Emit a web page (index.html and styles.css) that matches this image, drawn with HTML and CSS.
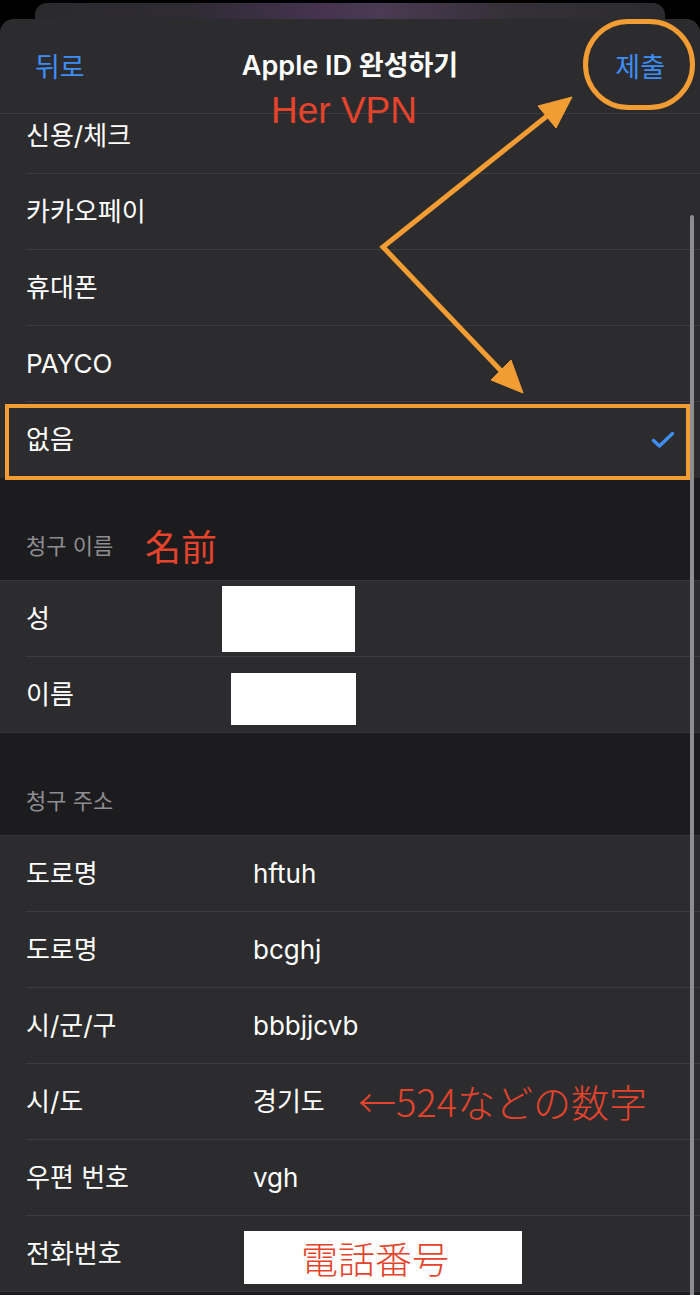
FILE: index.html
```html
<!DOCTYPE html>
<html lang="ko">
<head>
<meta charset="utf-8">
<title>Apple ID 완성하기</title>
<link rel="stylesheet" href="styles.css">
</head>
<body>
<div class="screen">
  <div class="backcard"></div>
  <div class="sheet">
    <header class="nav">
      <span class="nav-btn">뒤로</span>
      <h1 class="nav-title">Apple ID 완성하기</h1>
      <span class="nav-btn nav-right">제출</span>
    </header>

    <div class="scroll-clip">
      <ul class="group scrolled">
        <li class="row"><div class="cell"><span class="label">신용/체크</span></div></li>
        <li class="row"><div class="cell"><span class="label">카카오페이</span></div></li>
        <li class="row"><div class="cell"><span class="label">휴대폰</span></div></li>
        <li class="row"><div class="cell"><span class="label">PAYCO</span></div></li>
        <li class="row"><div class="cell last"><span class="label">없음</span>
          <svg class="check" viewBox="0 0 24 18" width="24" height="18"><polyline points="2.5,9.5 8.5,15 21.5,2.5" fill="none" stroke="#3e8ef7" stroke-width="3.4" stroke-linecap="round" stroke-linejoin="round"/></svg>
        </div></li>
      </ul>
    </div>

    <div class="section-head">청구 이름</div>
    <ul class="group bordered">
      <li class="row"><div class="cell"><span class="label">성</span></div><span class="redact redact-last"></span></li>
      <li class="row"><div class="cell last"><span class="label">이름</span></div><span class="redact redact-first"></span></li>
    </ul>

    <div class="section-head">청구 주소</div>
    <ul class="group bordered">
      <li class="row"><div class="cell"><span class="label">도로명</span><span class="value">hftuh</span></div></li>
      <li class="row"><div class="cell"><span class="label">도로명</span><span class="value">bcghj</span></div></li>
      <li class="row"><div class="cell"><span class="label">시/군/구</span><span class="value">bbbjjcvb</span></div></li>
      <li class="row"><div class="cell"><span class="label">시/도</span><span class="value">경기도</span></div></li>
      <li class="row"><div class="cell"><span class="label">우편 번호</span><span class="value">vgh</span></div></li>
      <li class="row"><div class="cell last"><span class="label">전화번호</span></div><span class="redact redact-phone">電話番号</span></li>
    </ul>
  </div>

  <div class="annotations">
    <div class="scrollbar"></div>
    <div class="ring"></div>
    <div class="hl-box"></div>
    <svg class="arrows" viewBox="0 0 700 1295" width="700" height="1295">
      <g fill="#f29d34" stroke="#f29d34" stroke-width="5" stroke-linejoin="miter">
        <polyline points="552,112 383,247 505,375" fill="none"/>
        <polygon points="572,97 556,128 538,106" stroke-width="1"/>
        <polygon points="523,393 511,360 491,380" stroke-width="1"/>
      </g>
    </svg>
    <span class="note note-vpn">Her VPN</span>
    <span class="note note-name">名前</span>
    <span class="note note-digits">←524などの数字</span>
  </div>
</div>
</body>
</html>
```

FILE: styles.css
```css
* { box-sizing: border-box; }

html, body {
  margin: 0;
  padding: 0;
  background: #000;
}

body {
  width: 700px;
  height: 1295px;
  overflow: hidden;
  font-family: "Inter", "Noto Sans CJK KR", sans-serif;
  color: #fff;
}

.screen {
  position: relative;
  width: 700px;
  height: 1295px;
  overflow: hidden;
}

.backcard {
  height: 16px;
  margin: 3px 35px 0;
  border-radius: 12px 12px 0 0;
  background: linear-gradient(90deg, #2a2a2d 0%, #2f2b34 25%, #45334f 45%, #4a3a52 55%, #353038 75%, #2b2b2e 100%);
}

.sheet {
  background: #1c1c1e;
  border-radius: 14px 14px 0 0;
  overflow: hidden;
  height: 1276px;
}

.nav {
  height: 95px;
  display: grid;
  grid-template-columns: 1fr auto 1fr;
  align-items: center;
  padding: 0 35px 0 35px;
  background: #2c2c2e;
  border-bottom: 1px solid #3c3c3f;
}

.nav-btn {
  font-family: "Noto Sans CJK KR", sans-serif;
  font-size: 27px;
  color: #3e8ef7;
  line-height: 1;
  padding-bottom: 2px;
}

.nav-right { justify-self: end; }

.nav-title {
  margin: 0;
  font-size: 27px;
  font-weight: 600;
  line-height: 1;
  padding-bottom: 2px;
}

.scroll-clip {
  height: 364px;
  overflow: hidden;
  background: #2c2c2e;
}

.group {
  list-style: none;
  margin: 0;
  padding: 0;
  background: #2c2c2e;
}

.group.scrolled { margin-top: -16px; }

.group.bordered {
  border-top: 1px solid #38383b;
  border-bottom: 1px solid #38383b;
}

.row {
  position: relative;
  padding-left: 26px;
}

.cell {
  height: 76px;
  display: flex;
  align-items: center;
  border-bottom: 1px solid #3d3d40;
  padding-right: 25px;
}

.cell.last {
  border-bottom: none;
  height: 75px;
}

.label {
  width: 227px;
  flex: none;
  font-size: 26px;
  line-height: 1;
}

.value {
  font-size: 26px;
  line-height: 1;
}

.check {
  margin-left: auto;
  flex: none;
}

.section-head {
  height: 102px;
  display: flex;
  align-items: flex-end;
  padding: 0 0 22px 26px;
  font-size: 22px;
  line-height: 24px;
  color: #8d8d92;
}

.redact {
  position: absolute;
  background: #fff;
}

.redact-last { left: 222px; top: 5px; width: 133px; height: 66px; }
.redact-first { left: 231px; top: 16px; width: 125px; height: 52px; }

.redact-phone {
  left: 244px;
  top: 15px;
  width: 278px;
  height: 53px;
  display: flex;
  align-items: center;
  padding-left: 57px;
  font-family: "Noto Sans CJK JP", sans-serif;
  font-weight: 300;
  font-size: 37px;
  color: #e5432b;
}

.annotations {
  position: absolute;
  inset: 0;
  pointer-events: none;
}

.scrollbar {
  position: absolute;
  left: 690px;
  top: 215px;
  width: 4px;
  height: 1090px;
  border-radius: 2px;
  background: #8e8e92;
}

.ring {
  position: absolute;
  left: 583px;
  top: 19px;
  width: 112px;
  height: 91px;
  border: 5px solid #f29d34;
  border-radius: 46px;
}

.hl-box {
  position: absolute;
  left: 5px;
  top: 404px;
  width: 685px;
  height: 76px;
  border: 4px solid #f29d34;
}

.arrows {
  position: absolute;
  left: 0;
  top: 0;
}

.note {
  position: absolute;
  color: #e5432b;
  line-height: 1;
  white-space: nowrap;
}

.note-vpn {
  left: 271px;
  top: 92px;
  font-family: "Liberation Sans", sans-serif;
  font-size: 37px;
}

.note-name {
  left: 145px;
  top: 527px;
  font-family: "Noto Sans CJK JP", sans-serif;
  font-size: 36px;
}

.note-digits {
  left: 358px;
  top: 1082px;
  font-family: "Noto Sans CJK JP", sans-serif;
  font-weight: 300;
  font-size: 38px;
}
```
